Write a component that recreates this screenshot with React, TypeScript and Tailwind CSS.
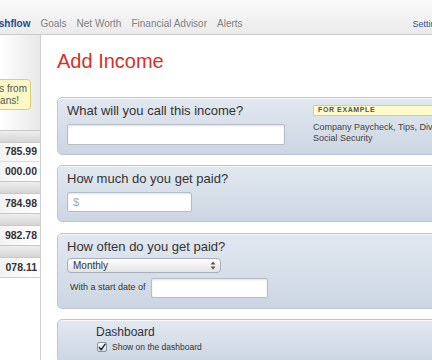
import React from "react";

const navItems = ["Goals", "Net Worth", "Financial Advisor", "Alerts"];

const sidebarGroups = [
  ["785.99", "000.00"],
  ["784.98"],
  ["982.78"],
  ["078.11"],
];

function Card({ children, className = "" }: { children: React.ReactNode; className?: string }) {
  return (
    <div
      className={`min-w-[420px] shrink-0 rounded-[5px] border border-[#bcc6d3] bg-gradient-to-b from-[#e2e8f0] to-[#ccd6e2] shadow-[inset_0_1px_0_rgba(255,255,255,0.7)] ${className}`}
    >
      {children}
    </div>
  );
}

function TextInput({ className = "", placeholder }: { className?: string; placeholder?: string }) {
  return (
    <div
      className={`flex items-center rounded-[2px] border border-[#b5bdc8] bg-white pl-[5px] text-[11px] text-[#a8a8a8] shadow-[inset_0_1px_2px_rgba(0,0,0,0.12)] ${className}`}
    >
      {placeholder}
    </div>
  );
}

export default function App() {
  return (
    <div className="w-[432px] h-[360px] overflow-hidden bg-white font-['Liberation_Sans',Arial,sans-serif] text-[#333]">
      {/* Top navigation */}
      <div className="h-[35px] w-[460px] flex items-start pt-[18px] pr-[15px] border-b border-[#c9c9c9] bg-gradient-to-b from-[#fafafa] to-[#ebebeb]">
        <div className="flex gap-[10px] -ml-[14px] text-[10px] leading-[12px]">
          <span className="font-bold text-[#1e4d8c]">Cashflow</span>
          {navItems.map((item) => (
            <span key={item} className="text-[#808080]">
              {item}
            </span>
          ))}
        </div>
        <span className="ml-auto text-[9px] leading-[12px] text-[#2b5597]">Settings</span>
      </div>

      <div className="flex h-[325px]">
        {/* Sidebar */}
        <div className="w-[41px] shrink-0 overflow-hidden border-r border-[#cfcfcf] flex flex-col">
          <div className="h-[95px] pt-[44px] flex justify-end pr-[9px] bg-gradient-to-r from-white to-[#e8e8e8]">
            <div className="w-[150px] h-[31px] shrink-0 rounded-[4px] border border-[#dccf72] bg-[#fcf9c6] flex flex-col items-end justify-center pr-[3px] text-[10px] leading-[12px] text-[#555]">
              <span className="whitespace-nowrap">Import transactions from</span>
              <span className="whitespace-nowrap pr-[8px]">your bank accounts and loans!</span>
            </div>
          </div>
          <div className="border-b border-[#cfcfcf]">
            {sidebarGroups.map((group, i) => (
              <div key={i}>
                <div className="h-[13px] border-y border-[#c8c8c8] bg-gradient-to-b from-[#eeeeee] to-[#d5d5d5]" />
                {group.map((value, j) => (
                  <div
                    key={value}
                    className={`h-[19px] flex items-center justify-end pr-[3px] bg-gradient-to-r from-[#f3f3f3] to-white text-[10.5px] font-bold text-[#333] whitespace-nowrap ${j < group.length - 1 ? "border-b border-[#dddddd]" : ""}`}
                  >
                    {value}
                  </div>
                ))}
              </div>
            ))}
          </div>
        </div>

        {/* Main */}
        <div className="flex-1 pl-[16px] flex flex-col">
          <h1 className="mt-[14px] text-[20px] leading-[24px] text-[#d3322c]">Add Income</h1>

          <Card className="mt-[24px] px-[9px] pt-[4px] pb-[9px]">
            <div className="flex items-start">
              <div className="w-[218px]">
                <div className="text-[13px] leading-[18px] text-[#333]">What will you call this income?</div>
                <TextInput className="mt-[4px] h-[21px]" />
              </div>
              <div className="ml-[28px] mt-[3px] w-[200px]">
                <div className="h-[11px] flex items-center rounded-[1px] border border-[#d9cf84] bg-[#fdfbc9] pl-[4px] text-[7px] font-bold tracking-[0.6px] text-[#555]">
                  FOR EXAMPLE
                </div>
                <div className="mt-[6px] text-[9px] leading-[11px] text-[#444]">
                  <div className="whitespace-nowrap">Company Paycheck, Tips, Dividends,</div>
                  <div>Social Security</div>
                </div>
              </div>
            </div>
          </Card>

          <Card className="mt-[10px] px-[9px] pt-[4px] pb-[9px]">
            <div className="text-[13px] leading-[18px]">How much do you get paid?</div>
            <TextInput className="mt-[4px] h-[20px] w-[125px]" placeholder="$" />
          </Card>

          <Card className="mt-[11px] px-[9px] pt-[4px] pb-[10px]">
            <div className="text-[13px] leading-[18px]">How often do you get paid?</div>
            <div className="mt-[2px] h-[15px] w-[154px] flex items-center justify-between rounded-[4px] border border-[#a9afb8] bg-gradient-to-b from-white to-[#e3e3e3] pl-[5px] pr-[4px] text-[10px] text-[#333]">
              <span>Monthly</span>
              <svg width="6" height="9" viewBox="0 0 6 9" className="text-[#555]">
                <path d="M3 0.5 L5.5 3.5 H0.5 Z" fill="currentColor" />
                <path d="M3 8.5 L5.5 5.5 H0.5 Z" fill="currentColor" />
              </svg>
            </div>
            <div className="mt-[5px] flex items-center">
              <span className="pl-[3px] w-[84px] text-[9px] text-[#333]">With a start date of</span>
              <TextInput className="h-[20px] w-[117px]" />
            </div>
          </Card>

          <Card className="mt-[10px] pl-[38px] pt-[4px] pb-[10px]">
            <div className="text-[12px] leading-[16px] text-[#333]">Dashboard</div>
            <div className="mt-[2px] flex items-center pl-[1px]">
              <span className="w-[10px] h-[10px] flex items-center justify-center rounded-[2px] border border-[#8c939c] bg-gradient-to-b from-white to-[#d6dbe2]">
                <svg width="9" height="9" viewBox="0 0 9 9">
                  <path d="M1.5 4.5 L3.6 7 L8 0.8" fill="none" stroke="#1d2b44" strokeWidth="1.6" strokeLinecap="round" strokeLinejoin="round" />
                </svg>
              </span>
              <span className="ml-[5px] text-[8.5px] leading-[10px] text-[#333]">Show on the dashboard</span>
            </div>
          </Card>
        </div>
      </div>
    </div>
  );
}
